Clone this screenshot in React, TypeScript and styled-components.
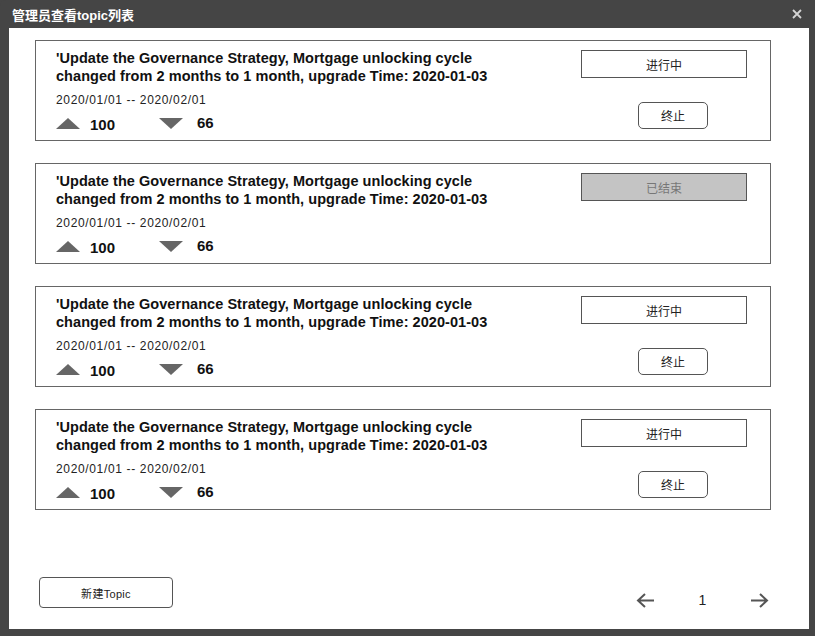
import React from 'react';
import styled, { createGlobalStyle } from 'styled-components';

type Status = 'running' | 'ended';

interface Topic {
  id: number;
  title: string;
  start: string;
  end: string;
  up: number;
  down: number;
  status: Status;
}

const topics: Topic[] = [1, 2, 3, 4].map((id) => ({
  id,
  title:
    "'Update the Governance Strategy, Mortgage unlocking cycle changed from 2 months to 1 month, upgrade Time: 2020-01-03",
  start: '2020/01/01',
  end: '2020/02/01',
  up: 100,
  down: 66,
  status: id === 2 ? 'ended' : 'running',
}));

const GlobalStyle = createGlobalStyle`
  html, body {
    margin: 0;
    padding: 0;
    background: #454545;
  }
  * {
    box-sizing: border-box;
  }
`;

const TriangleIcon: React.FC<{ dir: 'up' | 'down' }> = ({ dir }) => (
  <svg width="24" height="11" viewBox="0 0 24 11">
    <polygon points={dir === 'up' ? '12,0 24,11 0,11' : '0,0 24,0 12,11'} fill="#666" />
  </svg>
);

const ArrowIcon: React.FC<{ dir: 'left' | 'right' }> = ({ dir }) => (
  <svg width="19" height="15" viewBox="0 0 19 15" style={{ transform: dir === 'right' ? 'scaleX(-1)' : undefined }}>
    <path d="M2 7.5H18M9 1L2 7.5L9 14" fill="none" stroke="#555" strokeWidth="2" />
  </svg>
);

const TopicCard: React.FC<{ topic: Topic }> = ({ topic }) => (
  <Card>
    <Info>
      <Title>{topic.title}</Title>
      <DateRange>
        {topic.start} -- {topic.end}
      </DateRange>
      <Votes>
        <Vote>
          <TriangleIcon dir="up" />
          <VoteCount>{topic.up}</VoteCount>
        </Vote>
        <Vote>
          <TriangleIcon dir="down" />
          <VoteCount $raised>{topic.down}</VoteCount>
        </Vote>
      </Votes>
    </Info>
    <Actions>
      <StatusBox $ended={topic.status === 'ended'}>{topic.status === 'ended' ? '已结束' : '进行中'}</StatusBox>
      {topic.status === 'running' && <StopButton>终止</StopButton>}
    </Actions>
  </Card>
);

const App: React.FC = () => (
  <>
    <GlobalStyle />
    <Modal>
      <TitleBar>
        <ModalTitle>管理员查看topic列表</ModalTitle>
        <CloseButton>
          <svg width="10" height="10" viewBox="0 0 10 10">
            <path d="M1 1L9 9M9 1L1 9" stroke="#d4d4d4" strokeWidth="1.8" />
          </svg>
        </CloseButton>
      </TitleBar>
      <Body>
        <List>
          {topics.map((t) => (
            <TopicCard key={t.id} topic={t} />
          ))}
        </List>
        <Footer>
          <NewButton>新建Topic</NewButton>
          <Pager>
            <PageArrow>
              <ArrowIcon dir="left" />
            </PageArrow>
            <PageNumber>1</PageNumber>
            <PageArrow>
              <ArrowIcon dir="right" />
            </PageArrow>
          </Pager>
        </Footer>
      </Body>
    </Modal>
  </>
);

const Modal = styled.div`
  width: 815px;
  height: 636px;
  background: #454545;
  border-radius: 6px 6px 0 0;
  display: flex;
  flex-direction: column;
  font-family: 'Liberation Sans', 'Noto Sans CJK SC', sans-serif;
`;

const TitleBar = styled.div`
  height: 28px;
  flex-shrink: 0;
  display: flex;
  align-items: center;
  justify-content: space-between;
  padding: 0 13px 0 12px;
`;

const ModalTitle = styled.div`
  font-family: 'Liberation Sans', 'Noto Sans CJK SC', sans-serif;
  font-size: 13px;
  font-weight: 600;
  color: #fff;
`;

const CloseButton = styled.div`
  display: flex;
  align-items: center;
  cursor: pointer;
`;

const Body = styled.div`
  flex: 1;
  margin: 0 6px 7px 9px;
  background: #fff;
  display: flex;
  flex-direction: column;
  padding: 12px 38px 21px 26px;
`;

const List = styled.div`
  display: flex;
  flex-direction: column;
  gap: 22px;
`;

const Card = styled.div`
  height: 101px;
  border: 1px solid #666;
  display: flex;
  justify-content: space-between;
  padding: 8px 23px 0 20px;
`;

const Info = styled.div`
  display: flex;
  flex-direction: column;
`;

const Title = styled.div`
  width: 450px;
  font-size: 14.5px;
  font-weight: 700;
  line-height: 18px;
  letter-spacing: 0.05px;
  color: #111;
`;

const DateRange = styled.div`
  margin-top: 7px;
  font-size: 12px;
  letter-spacing: 0.65px;
  line-height: 16px;
  color: #222;
`;

const Votes = styled.div`
  margin-top: 6px;
  display: flex;
  gap: 43px;
`;

const Vote = styled.div`
  display: flex;
  align-items: center;
  gap: 10px;
  width: 60px;
  height: 18px;
`;

const VoteCount = styled.span<{ $raised?: boolean }>`
  font-size: 15px;
  font-weight: 700;
  color: #111;
  position: relative;
  top: ${({ $raised }) => ($raised ? '-1px' : '1px')};
  padding-left: ${({ $raised }) => ($raised ? '4px' : '0')};
`;

const Actions = styled.div`
  width: 166px;
  display: flex;
  flex-direction: column;
  padding-top: 1px;
`;

const StatusBox = styled.div<{ $ended: boolean }>`
  height: 28px;
  border: 1px solid #555;
  background: ${({ $ended }) => ($ended ? '#c4c4c4' : '#fff')};
  color: ${({ $ended }) => ($ended ? '#777' : '#222')};
  font-family: 'Noto Sans CJK SC', sans-serif;
  font-size: 12px;
  display: flex;
  align-items: center;
  justify-content: center;
`;

const StopButton = styled.button`
  margin: 24px 0 0 57px;
  width: 70px;
  height: 27px;
  border: 1px solid #555;
  border-radius: 5px;
  background: #fff;
  color: #222;
  font-family: 'Noto Sans CJK SC', sans-serif;
  font-size: 12px;
  padding: 0;
  cursor: pointer;
`;

const Footer = styled.div`
  margin-top: auto;
  display: flex;
  justify-content: space-between;
  align-items: flex-end;
  padding: 0 2px 0 4px;
`;

const NewButton = styled.button`
  width: 134px;
  height: 31px;
  border: 1px solid #555;
  border-radius: 4px;
  background: #fff;
  color: #222;
  font-family: 'Liberation Sans', 'Noto Sans CJK SC', sans-serif;
  font-size: 11px;
  letter-spacing: 0.3px;
  padding: 0;
  cursor: pointer;
`;

const Pager = styled.div`
  display: flex;
  align-items: center;
  height: 17px;
  margin-bottom: -1px;
`;

const PageArrow = styled.div`
  display: flex;
  align-items: center;
  cursor: pointer;
`;

const PageNumber = styled.span`
  font-size: 14px;
  color: #222;
  width: 95px;
  text-align: center;
  line-height: 17px;
`;

export default App;
